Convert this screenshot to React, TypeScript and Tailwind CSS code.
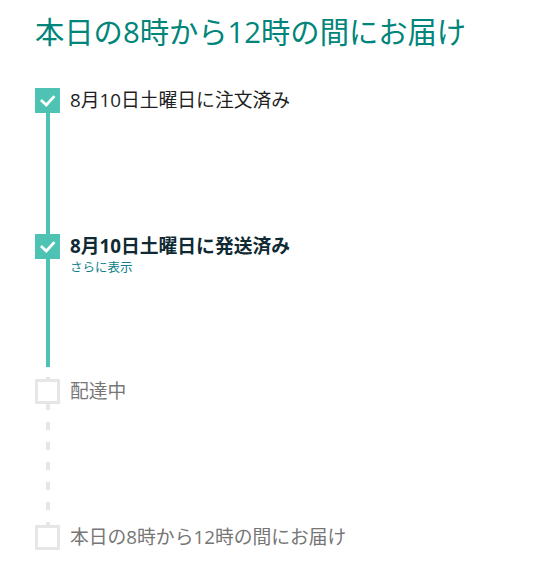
import React from 'react';

type Step = {
  label: string;
  done: boolean;
  bold?: boolean;
  more?: boolean;
};

const steps: Step[] = [
  { label: '8月10日土曜日に注文済み', done: true },
  { label: '8月10日土曜日に発送済み', done: true, bold: true, more: true },
  { label: '配達中', done: false },
  { label: '本日の8時から12時の間にお届け', done: false },
];

const font = { fontFamily: '"Open Sans", "Noto Sans CJK JP", sans-serif' };

const CheckBox = ({ done }: { done: boolean }) =>
  done ? (
    <div className="w-[25px] h-[25px] bg-[#4fc3b3] flex items-center justify-center shrink-0">
      <svg width="25" height="25" viewBox="0 0 25 25" fill="none">
        <path d="M7 13l4.3 4L18.5 9.2" stroke="white" strokeWidth="2.8" strokeLinecap="square" />
      </svg>
    </div>
  ) : (
    <div className="w-[25px] h-[25px] border-[3px] border-[#e6e6e6] bg-white shrink-0" />
  );

const Connector = ({ index }: { index: number }) => {
  if (index === 0) return <div className="w-1 h-[121px] bg-[#4fc3b3]" />;
  if (index === 1)
    return (
      <div className="flex flex-col items-center h-[120px]">
        <div className="w-1 h-[108px] bg-[#4fc3b3]" />
        <div className="w-1 h-[10px]" />
        <div className="w-1 h-[2px] bg-[#e6e6e6]" />
      </div>
    );
  if (index === 2)
    return (
      <div className="flex flex-col items-center h-[121px]">
        <div className="w-1 h-[6px] bg-[#e6e6e6]" />
        <div className="flex flex-col gap-[12px] py-[12px]">
          {[0, 1, 2, 3, 4].map(i => (
            <div key={i} className="w-1 h-[8px] bg-[#e6e6e6]" />
          ))}
        </div>
        <div className="w-1 h-[3px] bg-[#e6e6e6]" />
      </div>
    );
  return null;
};

export default function App() {
  return (
    <div className="w-[538px] h-[586px] bg-white pl-[35px] pt-[12px]" style={font}>
      <h1 className="text-[29.3px] leading-[40px] text-[#00857a] font-normal">本日の8時から12時の間にお届け</h1>

      <div className="mt-[36px] flex flex-col">
        {steps.map((s, i) => (
          <div key={i} className="flex gap-[10px]">
            <div className="flex flex-col items-center w-[25px]">
              <CheckBox done={s.done} />
              <Connector index={i} />
            </div>
            <div className="flex flex-col">
              <div
                className={`h-[25px] flex items-center text-[18.8px] ${
                  s.bold ? 'font-bold text-[#0f2a33]' : s.done ? 'text-[#1f1f1f]' : 'text-[#767676]'
                }`}
              >
                {s.label}
              </div>
              {s.more && (
                <a className="text-[12.5px] leading-[18px] text-[#0e7f8c] cursor-pointer">さらに表示</a>
              )}
            </div>
          </div>
        ))}
      </div>
    </div>
  );
}
